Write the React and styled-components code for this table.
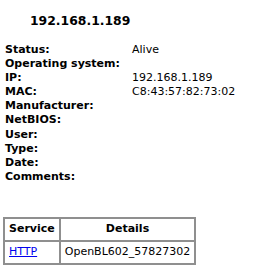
import React from 'react'
import styled, { createGlobalStyle } from 'styled-components'

const GlobalStyle = createGlobalStyle`
  body {
    margin: 0;
    background: #fff;
    color: #000;
    font-family: 'DejaVu Sans', Verdana, sans-serif;
    font-size: 11px;
  }
`

const Page = styled.div`
  padding: 13px 0 0 5px;
`
const Title = styled.h3`
  margin: 0 0 15px 25px;
  font-size: 12.4px;
  line-height: 15px;
  font-weight: 700;
`
const InfoGrid = styled.div`
  display: grid;
  grid-template-columns: 127px auto;
  line-height: 14.1px;
`
const Label = styled.div`
  font-weight: 700;
`
const Value = styled.div``

const ServiceTable = styled.table`
  margin: 33px 0 0 -2px;
  border: 1px solid #8f8f8f;
  border-spacing: 0;
  font-size: 11px;
  line-height: 13px;
`
const Head = styled.th`
  border: 1px solid #8f8f8f;
  padding: 3px 4px 5px;
  font-weight: 700;
  text-align: center;
`
const Cell = styled.td`
  border: 1px solid #8f8f8f;
  padding: 3px 4px 5px;
`
const Link = styled.a`
  color: #0000ee;
  text-decoration: underline;
`

const info = [
  ['Status:', 'Alive'],
  ['Operating system:', ''],
  ['IP:', '192.168.1.189'],
  ['MAC:', 'C8:43:57:82:73:02'],
  ['Manufacturer:', ''],
  ['NetBIOS:', ''],
  ['User:', ''],
  ['Type:', ''],
  ['Date:', ''],
  ['Comments:', ''],
]

const App = () => (
  <Page>
    <GlobalStyle />
    <Title>192.168.1.189</Title>
    <InfoGrid>
      {info.map(([label, value]) => (
        <React.Fragment key={label}>
          <Label>{label}</Label>
          <Value>{value}</Value>
        </React.Fragment>
      ))}
    </InfoGrid>
    <ServiceTable>
      <thead>
        <tr>
          <Head>Service</Head>
          <Head>Details</Head>
        </tr>
      </thead>
      <tbody>
        <tr>
          <Cell>
            <Link href="#">HTTP</Link>
          </Cell>
          <Cell>OpenBL602_57827302</Cell>
        </tr>
      </tbody>
    </ServiceTable>
  </Page>
)

export default App
